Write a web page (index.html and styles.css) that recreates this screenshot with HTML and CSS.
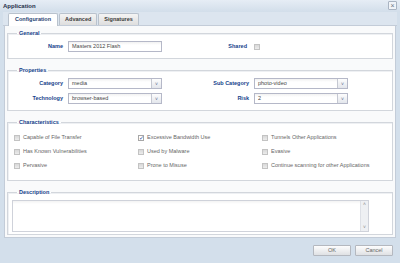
FILE: index.html
```html
<!DOCTYPE html>
<html lang="en">
<head>
    <meta charset="UTF-8">
    <meta name="viewport" content="width=device-width, initial-scale=1.0">
    <title>Application</title>
    <link rel="stylesheet" href="styles.css">
</head>
<body>

<div class="window">
    <div class="titlebar">
        <span class="title">Application</span>
        <span class="close">&times;</span>
    </div>

    <div class="tabs">
        <div class="tab active">Configuration</div>
        <div class="tab">Advanced</div>
        <div class="tab">Signatures</div>
    </div>

    <div class="panel">
        <fieldset class="group general">
            <legend>General</legend>
            <div class="form-grid">
                <label>Name</label>
                <div class="field">Masters 2012 Flash</div>
                <label>Shared</label>
                <div><span class="check off"></span></div>
            </div>
        </fieldset>

        <fieldset class="group properties">
            <legend>Properties</legend>
            <div class="form-grid">
                <label>Category</label>
                <div class="field select">media<span class="arrow">&#709;</span></div>
                <label>Sub Category</label>
                <div class="field select">photo-video<span class="arrow">&#709;</span></div>
                <label>Technology</label>
                <div class="field select">browser-based<span class="arrow">&#709;</span></div>
                <label>Risk</label>
                <div class="field select">2<span class="arrow">&#709;</span></div>
            </div>
        </fieldset>

        <fieldset class="group characteristics">
            <legend>Characteristics</legend>
            <div class="check-grid">
                <div class="item"><span class="check off"></span>Capable of File Transfer</div>
                <div class="item"><span class="check on">&#10003;</span>Excessive Bandwidth Use</div>
                <div class="item"><span class="check off"></span>Tunnels Other Applications</div>
                <div class="item"><span class="check off"></span>Has Known Vulnerabilities</div>
                <div class="item"><span class="check off"></span>Used by Malware</div>
                <div class="item"><span class="check off"></span>Evasive</div>
                <div class="item"><span class="check off"></span>Pervasive</div>
                <div class="item"><span class="check off"></span>Prone to Misuse</div>
                <div class="item"><span class="check off"></span>Continue scanning for other Applications</div>
            </div>
        </fieldset>

        <fieldset class="group description">
            <legend>Description</legend>
            <div class="textarea">
                <div class="scroll">
                    <span>&#708;</span>
                    <span>&#709;</span>
                </div>
            </div>
        </fieldset>
    </div>

    <div class="footer">
        <button class="btn">OK</button>
        <button class="btn">Cancel</button>
    </div>
</div>

</body>
</html>
```

FILE: styles.css
```css
body {
    margin: 0;
    padding: 0;
    font-family: "Liberation Sans", Arial, sans-serif;
    font-size: 5.5px;
    line-height: 7px;
    background-color: #d3dfeb;
}
.window {
    width: 400px;
    height: 263px;
    background-color: #d3dfeb;
    overflow: hidden;
}
.titlebar {
    height: 12px;
    display: flex;
    align-items: center;
    justify-content: space-between;
    padding: 0 3px 0 3px;
    background: linear-gradient(#e6edf5, #d2deea);
}
.title {
    font-size: 6px;
    font-weight: bold;
    color: #1d2f4a;
}
.close {
    width: 7px;
    height: 7px;
    border: 1px solid #a9b4c2;
    border-radius: 1px;
    background-color: #f1f4f8;
    color: #6b7685;
    font-size: 7px;
    line-height: 7px;
    text-align: center;
    margin-top: -1px;
}
.tabs {
    height: 14px;
    box-sizing: border-box;
    display: flex;
    align-items: flex-end;
    gap: 1px;
    padding: 0 0 0 5px;
    background-color: #dce5ef;
    border-bottom: 1px solid #c3ccd8;
    margin: 0 3px;
}
.tab {
    height: 12px;
    box-sizing: border-box;
    padding: 0 5px;
    border: 1px solid #b9c2cd;
    border-bottom: none;
    border-radius: 2px 2px 0 0;
    background: linear-gradient(#f4f4f4, #dedede);
    font-weight: bold;
    color: #3a3a3a;
    line-height: 11px;
}
.tab.active {
    background: #fff;
    color: #1f3f72;
    padding: 0 6px;
    height: 13px;
    margin-bottom: -1px;
}
.panel {
    height: 212px;
    box-sizing: border-box;
    margin: 0 4px;
    padding: 4px 2px 2px 2px;
    background-color: #f9fafb;
    border: 1px solid #c3ccd8;
    border-top: none;
    display: flex;
    flex-direction: column;
    gap: 8px;
}
.group {
    margin: 0;
    padding: 0;
    border: 1px solid #d2d6dc;
    background-color: #fff;
    box-shadow: inset 1px 1px 0 #eef0f3;
    min-width: 0;
}
.group legend {
    margin-left: 9px;
    padding: 0 2px;
    font-weight: bold;
    color: #15428b;
    line-height: 7px;
}
.form-grid {
    display: grid;
    grid-template-columns: 60px 94px 92px 94px;
    row-gap: 4px;
    align-items: center;
    padding: 4px 0 6px 0;
}
.form-grid label {
    text-align: right;
    padding-right: 5px;
    font-weight: bold;
    color: #15428b;
}
.general .form-grid label:nth-of-type(2) {
    padding-right: 7px;
}
.field {
    position: relative;
    height: 11px;
    box-sizing: border-box;
    padding: 0 3px;
    border: 1px solid #b5b8c8;
    background: linear-gradient(#f1f1f1, #fff 3px);
    color: #444;
    line-height: 9px;
}
.arrow {
    position: absolute;
    top: 0;
    right: 0;
    width: 9px;
    height: 9px;
    border-left: 1px solid #c5c8d2;
    background: linear-gradient(#fdfdfd, #e3e6ec);
    color: #5a6a8a;
    font-size: 5px;
    text-align: center;
    line-height: 10px;
}
.check {
    display: inline-block;
    width: 6px;
    height: 6px;
    box-sizing: border-box;
    border: 1px solid #c3c3c3;
    vertical-align: middle;
}
.check.off {
    background: linear-gradient(#d8d8d8, #ececec);
}
.check.on {
    background-color: #fff;
    border-color: #a7a7a7;
    color: #2f4f9a;
    font-size: 6px;
    line-height: 5px;
    text-align: center;
}
.check-grid {
    display: grid;
    grid-template-columns: 124px 124px 124px;
    row-gap: 5px;
    padding: 7px 0 10px 6px;
}
.item {
    height: 9px;
    display: flex;
    align-items: center;
    gap: 3px;
    color: #666;
    white-space: nowrap;
}
.description {
    flex: 1;
}
.textarea {
    position: relative;
    height: 32px;
    box-sizing: border-box;
    margin: 4px 0 0 4px;
    width: 357px;
    border: 1px solid #cfd2da;
    background: linear-gradient(#f3f3f3, #fff 3px);
}
.scroll {
    position: absolute;
    top: 0;
    right: 0;
    bottom: 0;
    width: 7px;
    display: flex;
    flex-direction: column;
    justify-content: space-between;
    align-items: center;
    background-color: #eef0f3;
    border-left: 1px solid #dde0e6;
    color: #888;
    font-size: 5px;
    line-height: 7px;
}
.footer {
    display: flex;
    justify-content: flex-end;
    gap: 4px;
    padding: 7px 7px 0 0;
}
.btn {
    width: 38px;
    height: 11px;
    padding: 0;
    border: 1px solid #b4b8bf;
    border-radius: 1px;
    background: linear-gradient(#fdfdfd, #dfe1e4);
    font-family: "Liberation Sans", Arial, sans-serif;
    font-size: 5.5px;
    color: #666;
    line-height: 9px;
}
```
